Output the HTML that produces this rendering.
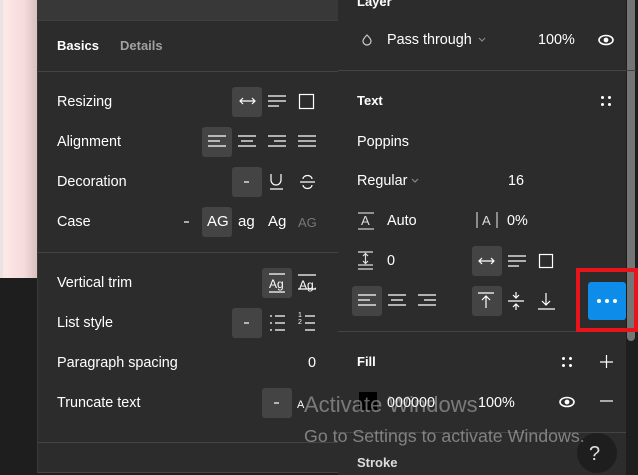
<!DOCTYPE html>
<html><head><meta charset="utf-8"><style>
*{margin:0;padding:0;box-sizing:border-box}
body{width:638px;height:475px;overflow:hidden;background:#1e1e1e;position:relative;font-family:"Liberation Sans",sans-serif;color:#fff;font-size:14.4px}
.a{position:absolute}
.t{position:absolute;white-space:nowrap;line-height:16px}
.b{position:absolute;width:30px;height:30px;background:#444;border-radius:3px}
.hl{position:absolute;height:1px;background:#444}
svg{position:absolute;overflow:visible}
</style></head><body>
<div class="a" style="left:3px;top:0;width:34px;height:278px;background:linear-gradient(90deg,#fde8e8 0%,#f6dcdc 60%,#d9c0c0 100%)"></div>
<div class="a" style="left:0;top:0;width:3px;height:278px;background:#e9e3e3"></div>
<div class="a" style="left:37px;top:0;width:301px;height:473px;background:#2c2c2c;border-left:1px solid #3a3a3a;border-bottom:1px solid #444"></div>
<div class="a" style="left:38px;top:0;width:300px;height:20px;background:#383838"></div>
<div class="hl" style="left:38px;top:20px;width:300px;background:#3e3e3e"></div>
<div class="t" style="left:57px;top:38px;font-weight:bold;font-size:13px">Basics</div>
<div class="t" style="left:120px;top:38px;font-weight:bold;font-size:13px;color:#a0a0a0">Details</div>
<div class="hl" style="left:38px;top:71px;width:300px"></div>
<div class="t" style="left:57px;top:94px">Resizing</div>
<div class="t" style="left:57px;top:134px">Alignment</div>
<div class="t" style="left:57px;top:174px">Decoration</div>
<div class="t" style="left:57px;top:214px">Case</div>
<div class="b" style="left:232px;top:87px"></div>
<div class="b" style="left:202px;top:127px"></div>
<div class="b" style="left:232px;top:167px"></div>
<div class="b" style="left:202px;top:207px"></div>
<div class="t" style="left:207px;top:214px;font-size:15px">AG</div>
<div class="t" style="left:238px;top:214px;font-size:15px">ag</div>
<div class="t" style="left:268px;top:214px;font-size:15px">Ag</div>
<div class="t" style="left:298px;top:215px;font-size:13px;color:#777">AG</div>
<div class="hl" style="left:38px;top:252px;width:300px"></div>
<div class="t" style="left:57px;top:275px">Vertical trim</div>
<div class="t" style="left:57px;top:315px">List style</div>
<div class="t" style="left:57px;top:355px">Paragraph spacing</div>
<div class="t" style="left:57px;top:395px">Truncate text</div>
<div class="b" style="left:262px;top:268px"></div>
<div class="b" style="left:232px;top:308px"></div>
<div class="b" style="left:262px;top:388px"></div>
<div class="t" style="left:269px;top:276px;font-size:12px">Ag</div>
<div class="t" style="left:299px;top:277px;font-size:12px">Ag.</div>
<div class="t" style="left:298px;top:312px;font-size:7px;line-height:7px">1<br>2</div>
<div class="t" style="left:308px;top:355px">0</div>
<div class="t" style="left:297px;top:397px;font-size:11px">A</div>
<div class="hl" style="left:38px;top:442px;width:300px"></div>
<div class="a" style="left:338px;top:0;width:288px;height:475px;background:#2c2c2c"></div>
<div class="a" style="left:627px;top:0;width:8px;height:341px;background:#757575;border-radius:0 0 4px 4px"></div>
<div class="t" style="left:357px;top:-6px;font-weight:bold;font-size:13px">Layer</div>
<div class="t" style="left:387px;top:32px">Pass through</div>
<div class="t" style="left:538px;top:32px">100%</div>
<div class="hl" style="left:338px;top:70px;width:298px"></div>
<div class="t" style="left:357px;top:93px;font-weight:bold;font-size:13px">Text</div>
<div class="a" style="left:601px;top:96px;width:3px;height:3px;border-radius:2px;background:#fff;box-shadow:7px 0 #fff,0 7px #fff,7px 7px #fff"></div>
<div class="t" style="left:357px;top:134px">Poppins</div>
<div class="t" style="left:357px;top:173px">Regular</div>
<div class="t" style="left:508px;top:173px">16</div>
<div class="t" style="left:361px;top:213px;font-size:13px;color:#ddd">A</div>
<div class="t" style="left:387px;top:213px">Auto</div>
<div class="t" style="left:482px;top:213px;font-size:13px;color:#ddd">A</div>
<div class="t" style="left:507px;top:213px">0%</div>
<div class="t" style="left:387px;top:253px">0</div>
<div class="b" style="left:472px;top:246px"></div>
<div class="b" style="left:352px;top:286px"></div>
<div class="b" style="left:472px;top:286px"></div>
<div class="hl" style="left:338px;top:331px;width:288px"></div>
<div class="t" style="left:357px;top:354px;font-weight:bold;font-size:13px">Fill</div>
<div class="a" style="left:562px;top:357px;width:3px;height:3px;border-radius:2px;background:#fff;box-shadow:7px 0 #fff,0 7px #fff,7px 7px #fff"></div>
<div class="a" style="left:359px;top:392px;width:18px;height:18px;background:#000"></div>
<div class="t" style="left:387px;top:395px">000000</div>
<div class="t" style="left:478px;top:395px">100%</div>
<div class="hl" style="left:338px;top:432px;width:288px"></div>
<div class="t" style="left:357px;top:455px;font-weight:bold;font-size:13px;color:#ddd">Stroke</div>
<div class="a" style="left:576px;top:268px;width:62px;height:64px;border:4px solid #e8141c"></div>
<div class="a" style="left:588px;top:282px;width:38px;height:38px;background:#0d8ce9;border-radius:3px"></div>
<div class="a" style="left:597px;top:299px;width:4px;height:4px;border-radius:2px;background:#fff;box-shadow:8px 0 #fff,16px 0 #fff"></div>
<div class="a" style="left:577px;top:433px;width:40px;height:40px;border-radius:20px;background:#1e1e1e"></div>
<div class="t" style="left:589px;top:443px;font-size:20px;line-height:22px;color:#ddd">?</div>
<svg width="638" height="475" style="left:0;top:0" stroke="#fff" fill="none" stroke-width="1.2">
<path d="M240 101h15M243 98l-3 3 3 3M252 98l3 3-3 3"/>
<path d="M268 96h18M268 101h18M268 106h11"/>
<rect x="299.5" y="94.5" width="14" height="14"/>
<path d="M208 136h18M208 141h12M208 146h18"/>
<path d="M238 136h18M241 141h12M238 146h18"/>
<path d="M268 136h18M274 141h12M268 146h18"/>
<path d="M298 136h18M298 141h18M298 146h18"/>
<path d="M244 182h5"/>
<path d="M271 174v6a5 5 0 0 0 10 0v-6M270 189h13"/>
<path d="M300 182h15M303 179a4.5 3.5 0 0 1 9 0M303 185a4.5 3.5 0 0 0 9 0"/>
<path d="M184 222h5"/>
<path d="M269 274h16M269 292h16"/>
<path d="M298 275h18M298 289h18"/>
<path d="M244 323h5"/>
<path d="M270 316h2M270 323h2M270 330h2M275 316h10M275 323h10M275 330h10"/>
<path d="M305 316h10M305 323h10M305 330h10"/>
<path d="M274 403h5"/>
<path d="M367 35c2 2 4 4 4 6a4 4 0 0 1-8 0c0-2 2-4 4-6z" stroke="#ccc"/>
<path d="M479 38l3 3 3-3" stroke="#888"/>
<path d="M412 179l3 3 3-3" stroke="#888"/>
<ellipse cx="606" cy="40" rx="7" ry="4.5" stroke-width="1.6"/><circle cx="606" cy="40" r="1.8" fill="#fff"/>
<path d="M358 213h16M358 229h16" stroke="#ccc"/>
<path d="M477 212v16M497 212v16" stroke="#ccc"/>
<path d="M358 252h15M358 269h15M358 265h15M365.5 254v9M363 256l2.5-2.5 2.5 2.5M363 261l2.5 2.5 2.5-2.5" stroke="#ddd"/>
<path d="M479 261h15M482 258l-3 3 3 3M491 258l3 3-3 3"/>
<path d="M508 256h18M508 261h18M508 266h11"/>
<rect x="539.5" y="254.5" width="13" height="13"/>
<path d="M358 295h18M358 300h12M358 305h18"/>
<path d="M388 295h18M391 300h12M388 305h18"/>
<path d="M418 295h18M424 300h12M418 305h18"/>
<path d="M478 293h16M486 308v-12M482 300l4-4 4 4"/>
<path d="M508 301h16M516 292v6M513 295l3 3 3-3M516 310v-6M513 307l3-3 3 3"/>
<path d="M538 309h17M546 293v12M542 301l4 4 4-4"/>
<path d="M600 362h13M606.5 355v13"/>
<path d="M600 401h13"/>
<ellipse cx="567" cy="402" rx="7" ry="4.5" stroke-width="1.6"/><circle cx="567" cy="402" r="1.8" fill="#fff"/>
</svg>
<div class="t" style="left:304px;top:392px;font-size:22px;line-height:26px;color:rgba(200,200,200,0.5)">Activate Windows</div>
<div class="t" style="left:304px;top:426px;font-size:17.8px;line-height:20px;color:rgba(200,200,200,0.55)">Go to Settings to activate Windows.</div>
</body></html>
